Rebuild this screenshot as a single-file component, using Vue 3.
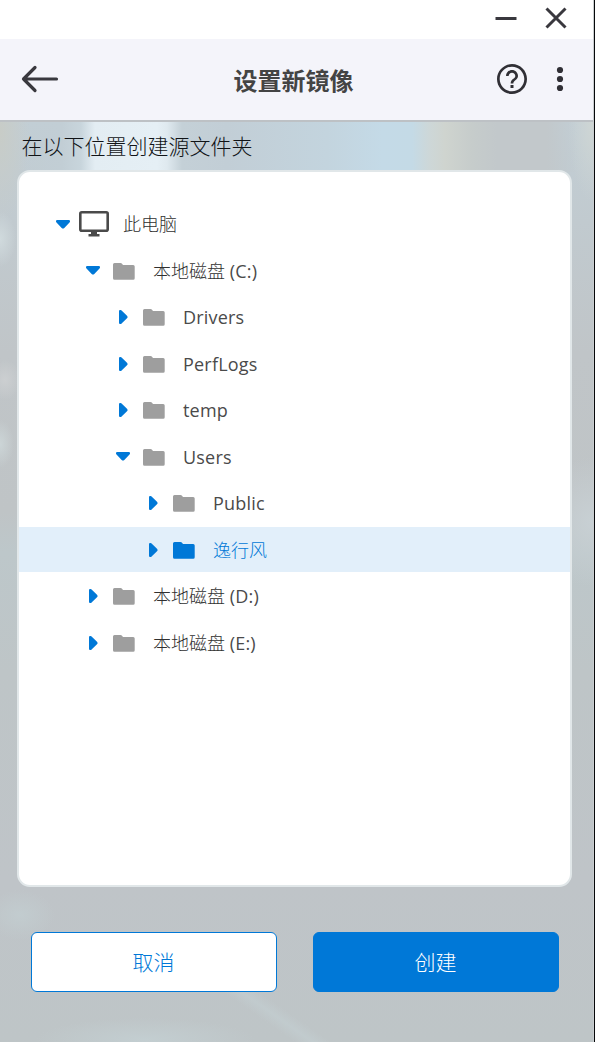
<script setup>
import {ref} from "vue";

const nodes = ref([
  {id: 1, name: "此电脑", level: 0, open: true, type: "pc"},
  {id: 2, name: "本地磁盘", latin: "(C:)", level: 1, open: true, type: "folder"},
  {id: 3, latin: "Drivers", level: 2, open: false, type: "folder"},
  {id: 4, latin: "PerfLogs", level: 2, open: false, type: "folder"},
  {id: 5, latin: "temp", level: 2, open: false, type: "folder"},
  {id: 6, latin: "Users", level: 2, open: true, type: "folder"},
  {id: 7, latin: "Public", level: 3, open: false, type: "folder"},
  {id: 8, name: "逸行风", level: 3, open: false, type: "folder"},
  {id: 9, name: "本地磁盘", latin: "(D:)", level: 1, open: false, type: "folder"},
  {id: 10, name: "本地磁盘", latin: "(E:)", level: 1, open: false, type: "folder"},
]);
const selected = ref(8);

const indent = (level) => {
  return 37 + level * 30 + "px";
}
</script>

<template>
  <div class="window">
    <div class="titlebar">
      <svg class="minimize" width="22" height="22" viewBox="0 0 22 22">
        <path d="M0.5 11.5h21" />
      </svg>
      <svg class="close" width="22" height="22" viewBox="0 0 22 22">
        <path d="M1.5 1.5l19 19M20.5 1.5l-19 19" />
      </svg>
    </div>
    <header class="header">
      <svg class="back" width="38" height="28" viewBox="0 0 38 28">
        <path d="M35.5 14H2.5M14 2.5L2.5 14L14 25.5" />
      </svg>
      <h1>设置新镜像</h1>
      <div class="actions">
        <svg width="30" height="30" viewBox="2 2 20 20">
          <path d="M11 18h2v-2h-2v2zm1-16C6.480 2 2 6.480 2 12s4.480 10 10 10 10-4.480 10-10S17.520 2 12 2zm0 18.200c-4.520 0-8.200-3.680-8.200-8.200S7.480 3.800 12 3.800s8.200 3.680 8.200 8.200-3.680 8.200-8.200 8.200zm0-14.200c-2.210 0-4 1.790-4 4h1.800c0-1.210.99-2.200 2.200-2.200s2.200.99 2.200 2.200c0 2-3.100 1.750-3.100 5h1.800c0-2.250 3.100-2.500 3.100-5 0-2.210-1.790-4-4-4z" />
        </svg>
        <svg width="8" height="26" viewBox="0 0 8 26">
          <circle cx="4" cy="4" r="3.100" />
          <circle cx="4" cy="13" r="3.100" />
          <circle cx="4" cy="22" r="3.100" />
        </svg>
      </div>
    </header>
    <main class="content">
      <p class="hint">在以下位置创建源文件夹</p>
      <ul class="tree">
        <li v-for="node in nodes" :key="node.id" class="node" :class="{selected: node.id == selected}" :style="{paddingLeft: indent(node.level)}" @click="selected = node.id">
          <span class="arrow" @click.stop="node.open = !node.open">
            <svg v-if="node.open" width="14" height="9" viewBox="0 0 14 9">
              <path d="M1.200 0h11.600q1.200 0 1.200 1v.6q0 .5-.5 1L8.300 8Q7 9.200 5.700 8L.5 2.600Q0 2.100 0 1.600V1Q0 0 1.200 0z" />
            </svg>
            <svg v-else width="9" height="14" viewBox="0 0 9 14">
              <path d="M0 1.200v11.600q0 1.200 1 1.200h.6q.5 0 1-.5L8 8.300Q9.200 7 8 5.700L2.600.5Q2.100 0 1.600 0H1Q0 0 0 1.200z" />
            </svg>
          </span>
          <span class="icon">
            <svg v-if="node.type == 'pc'" class="pc" width="30" height="26" viewBox="0 0 30 26">
              <rect x="1.300" y="1.300" width="27.400" height="18.400" rx="1.500" />
              <path d="M12 20h6v3h2.500v2.600h-11V23H12z" />
            </svg>
            <svg v-else class="folder" width="22" height="17" viewBox="0 0 22 17">
              <path d="M1.500 0H7.500Q8.300 0 8.800.6L10 2H20.200Q21.700 2 21.700 3.500V15.300Q21.700 16.800 20.200 16.800H1.500Q0 16.800 0 15.300V1.500Q0 0 1.500 0z" />
            </svg>
          </span>
          <span class="name">{{node.name}} <span v-if="node.latin" class="latin">{{node.latin}}</span></span>
        </li>
      </ul>
      <div class="buttons">
        <button class="cancel">取消</button>
        <button class="create">创建</button>
      </div>
    </main>
  </div>
</template>

<style>
body {
  margin: 0;
  background: #06080a;
}
</style>

<style scoped>
.window {
  display: flex;
  flex-direction: column;
  box-sizing: border-box;
  width: 594px;
  height: 1042px;
  border-right: 1px solid #c9cdcf;
  background: #fff;
  font-family: "Open Sans", "Noto Sans CJK SC", sans-serif;
}
.titlebar {
  display: flex;
  flex: none;
  justify-content: flex-end;
  gap: 28px;
  box-sizing: border-box;
  height: 39px;
  padding: 6.500px 26px 0 0;
}
.titlebar svg {
  fill: none;
  stroke: #39383e;
  stroke-width: 3;
}
.header {
  display: grid;
  flex: none;
  grid-template-columns: 98px 1fr 98px;
  align-items: center;
  box-sizing: border-box;
  height: 83px;
  padding: 0 29px 1px 21px;
  border-bottom: 2px solid #bdc1c5;
  background: #f4f4fa;
}
.back {
  fill: none;
  stroke: #39383e;
  stroke-width: 3.200;
  stroke-linecap: round;
  stroke-linejoin: round;
}
h1 {
  margin: 4px 0 0 2px;
  color: #444;
  font-size: 24px;
  line-height: 36px;
  text-align: center;
}
.actions {
  display: flex;
  justify-content: flex-end;
  align-items: center;
  gap: 29px;
  fill: #302f35;
}
.content {
  flex: 1;
  padding: 0 21px 0 17px;
  background:
    linear-gradient(90deg, #c2ced500 0, #c2ced5 45px, #c8d5dc 64px, #e3edf3 78px, #e5eff5 140px, #dfe9ef 150px, #c4d0d7 165px, #c2ced6 210px, #c3d4de 310px, #c4dae7 365px, #c4dae6 395px, #cdd7d8 412px, #cfd4cf 428px, #c6cccb 455px, #c2c8cb 480px, #c2c8cb 530px, #c2c8cb00 560px) 17px 0 / 576px 50px no-repeat,
    radial-gradient(ellipse 25px 80px at 593px 0, #cfd6d4, #cfd6d400),
    radial-gradient(ellipse 30px 90px at 0 10px, #c8ccc7, #c8ccc700),
    radial-gradient(ellipse 16px 28px at 0 117px, #d0dadd, #d0dadd00),
    radial-gradient(ellipse 16px 20px at 5px 258px, #cccfd1, #cccfd100),
    radial-gradient(ellipse 14px 24px at 0 322px, #ccd5d7, #ccd5d700),
    radial-gradient(ellipse 60px 65px at 593px 400px, #c8d0d4, #c8d0d400),
    radial-gradient(ellipse 35px 25px at 20px 793px, #c2cccf, #c2cccf00),
    radial-gradient(ellipse 110px 22px at 145px 918px, #c3ced1, #c3ced100),
    linear-gradient(35deg, #c3ced100 40%, #c3ced1aa 47%, #c3ced100 54%) 190px 870px / 190px 50px no-repeat,
    linear-gradient(#c2ced5 0, #c1cacf 100px, #c0c5c8 230px, #bfc4c6 390px, #bdc7ca 430px, #bec5c7 550px, #bfc4c8 760px, #bec5c7 920px);
}
.hint {
  margin: 0;
  padding: 8px 0 8px 4.500px;
  color: #101316;
  font-size: 21px;
  font-weight: 300;
  line-height: 32px;
}
.tree {
  display: flex;
  flex-direction: column;
  gap: 1.500px;
  box-sizing: border-box;
  height: 717px;
  margin: 0;
  padding: 29.500px 0;
  border: 2px solid #e1e7e9;
  border-radius: 13px;
  background: #fff;
  list-style: none;
}
.node {
  display: flex;
  align-items: center;
  height: 45px;
  color: #303030;
  font-size: 18px;
  cursor: pointer;
}
.arrow {
  display: flex;
  justify-content: center;
  width: 14px;
  margin-right: 9px;
  fill: #0078d7;
}
.icon {
  display: flex;
  justify-content: center;
  width: 30px;
  margin-right: 14px;
}
.pc {
  fill: #4a4a4a;
}
.pc rect {
  fill: none;
  stroke: #4a4a4a;
  stroke-width: 2.600;
}
.folder {
  margin: 1px 1px 0 0;
  fill: #9e9e9e;
}
.name {
  padding-top: 1px;
  line-height: 27px;
  font-weight: 300;
}
.latin {
  color: #4a4a4a;
  font-weight: 400;
  letter-spacing: 0.200px;
}
.selected {
  background: #e2effa;
  color: #0078d7;
}
.selected .folder {
  fill: #0078d7;
}
.selected .latin {
  color: #0078d7;
}
.buttons {
  display: flex;
  gap: 36px;
  padding: 45px 0 0 14px;
}
button {
  box-sizing: border-box;
  width: 246px;
  height: 60px;
  padding: 0 1px 2px 0;
  border: 1px solid #0078d7;
  border-radius: 6px;
  font-family: inherit;
  font-size: 21px;
  font-weight: 300;
}
.cancel {
  background: #fff;
  color: #0078d7;
}
.create {
  background: #0078d7;
  color: #fff;
}
</style>
